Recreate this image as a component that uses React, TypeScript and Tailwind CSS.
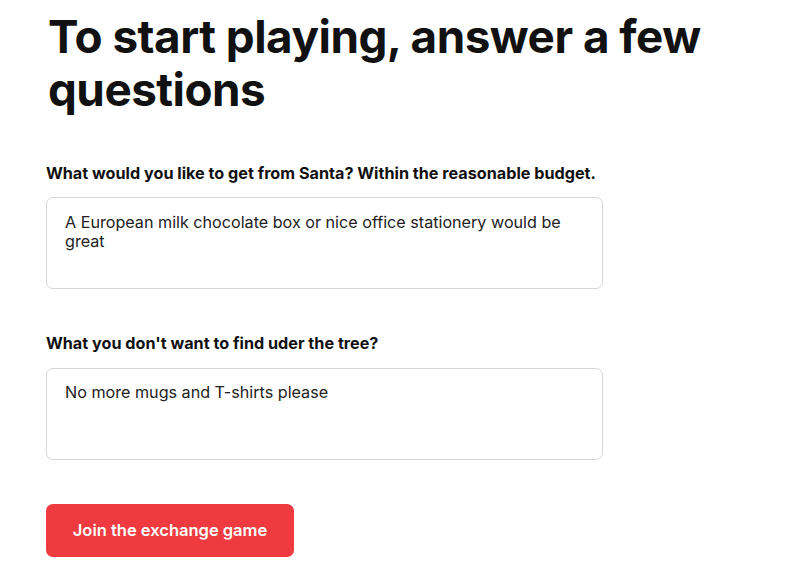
import React from "react";

export default function App() {
  return (
    <div className="min-h-[571px] bg-white pl-[46px] pt-[10px]" style={{ fontFamily: "Inter, 'Noto Sans', sans-serif" }}>
      <h1 className="text-[45.8px] font-bold leading-[53px] tracking-[-0.5px] text-[#111] w-[700px] pl-[2px]">
        To start playing, answer a few questions
      </h1>
      <form className="w-[557px] mt-[47px] flex flex-col">
        <label className="text-[16.2px] font-bold text-[#111] leading-[20px]">
          What would you like to get from Santa? Within the reasonable budget.
        </label>
        <textarea
          className="mt-[14px] h-[92px] w-full resize-none rounded-[7px] border border-[#d6d6d6] px-[18px] pt-[15px] pb-[10px] text-[16.15px] leading-[19px] text-[#222] outline-none"
          defaultValue="A European milk chocolate box or nice office stationery would be great"
        />
        <label className="mt-[44px] text-[16.2px] font-bold text-[#111] leading-[20px]">
          What you don't want to find uder the tree?
        </label>
        <textarea
          className="mt-[15px] h-[92px] w-full resize-none rounded-[7px] border border-[#d6d6d6] px-[18px] pt-[14px] pb-[10px] text-[16.15px] leading-[19px] text-[#222] outline-none"
          defaultValue="No more mugs and T-shirts please"
        />
        <button
          type="button"
          className="mt-[44px] h-[53px] w-[248px] rounded-[7px] bg-[#ef3b3f] text-[16.5px] font-semibold text-white"
        >
          Join the exchange game
        </button>
      </form>
    </div>
  );
}
